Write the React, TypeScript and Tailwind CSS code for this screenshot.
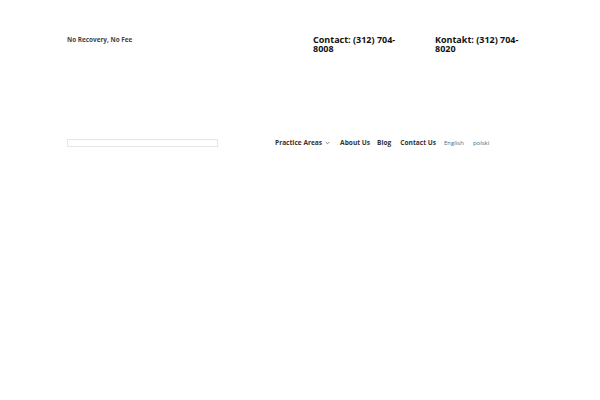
import React from 'react';

const App: React.FC = () => {
  return (
    <div className="w-[600px] h-[400px] bg-white" style={{ fontFamily: '"Open Sans", "Liberation Sans", sans-serif' }}>
      {/* Top bar */}
      <div className="flex items-start pl-[67px] pt-[35px]">
        <div className="w-[246px] text-[6.4px] leading-[10px] font-bold text-[#444]">No Recovery, No Fee</div>
        <div className="w-[90px] mr-[32px] text-[9px] leading-[9px] font-bold text-[#111]">Contact: (312) 704-8008</div>
        <div className="w-[100px] text-[9px] leading-[9px] font-bold text-[#111]">Kontakt: (312) 704-8020</div>
      </div>

      {/* Header row */}
      <div className="flex items-center pl-[67px] mt-[85px]">
        <div className="w-[151px] h-[8px] border border-[#e6e6e6] bg-white" />
        <nav className="flex items-center ml-[57px] text-[6.6px] leading-[10px]">
          <span className="flex items-center font-bold text-[#333]">
            Practice Areas
            <svg className="ml-[3px]" width="5" height="4" viewBox="0 0 5 4" fill="none">
              <path d="M0.7 1 L2.5 2.8 L4.3 1" stroke="#666" strokeWidth="0.8" />
            </svg>
          </span>
          <span className="ml-[10px] font-bold text-[#333]">About Us</span>
          <span className="ml-[7px] font-bold text-[#333]">Blog</span>
          <span className="ml-[9px] font-bold text-[#333]">Contact Us</span>
          <span className="ml-[8px] text-[6px] text-[#4a6a8a]">English</span>
          <span className="ml-[9px] text-[6px] text-[#4a6a8a]">polski</span>
        </nav>
      </div>
    </div>
  );
};

export default App;
